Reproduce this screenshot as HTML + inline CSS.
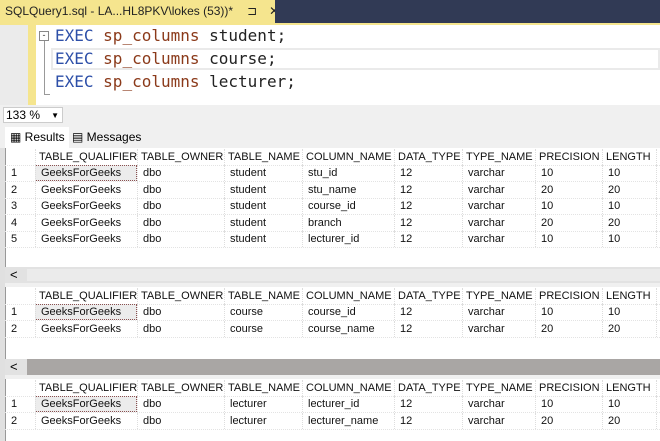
<!DOCTYPE html>
<html><head><meta charset="utf-8"><style>
*{margin:0;padding:0;box-sizing:border-box}
body{width:660px;height:441px;overflow:hidden;background:#f0f0f0;font-family:"Liberation Sans",sans-serif;position:relative}
.a{position:absolute}
.code{font-family:"DejaVu Sans Mono","Liberation Mono",monospace;font-size:16px;white-space:pre;left:55px}
.kw{color:#2d4fa8}.fn{color:#8b3a1a}.tx{color:#222}
.grid{position:absolute;left:5px;width:655px;background:#fff;border-left:1px solid #999}
.r{position:absolute;left:0;height:17px;width:655px;font-size:11px;color:#111;white-space:nowrap}
.r span{position:absolute;top:2px}
.r i{position:absolute;top:0;bottom:0;border-left:1px dotted #ddd}
.hl{position:absolute;left:30px;width:102px;height:16px;background:#ececec;border:1px dotted #8a5050}
.sb{position:absolute;left:5px;width:655px;height:16px;font-size:13px}
</style></head><body>
<div class="a" style="left:0;top:0;width:660px;height:23px;background:#313a55"></div>
<div class="a" style="left:0;top:0;width:275px;height:23px;background:#f5e58e;font-size:12px;color:#222;padding:4px 0 0 5px;white-space:nowrap;overflow:hidden">SQLQuery1.sql - LA...HL8PKV\lokes (53))*<span style="margin-left:14px">⊐</span><span style="margin-left:12px">✕</span></div>
<div class="a" style="left:0;top:23px;width:660px;height:2px;background:#f5e58e"></div>
<div class="a" style="left:0;top:25px;width:28px;height:80px;background:#ebebeb"></div>
<div class="a" style="left:28px;top:25px;width:8px;height:80px;background:#f5e58e"></div>
<div class="a" style="left:36px;top:25px;width:624px;height:80px;background:#fff"></div>
<div class="a" style="left:51px;top:48px;width:609px;height:22px;border:2px solid #eaeaea"></div>
<div class="a" style="left:39px;top:31px;width:10px;height:10px;border:1px solid #888;font-size:9px;line-height:7px;text-align:center;color:#333">-</div>
<div class="a" style="left:44px;top:41px;width:6px;height:54px;border-left:1px solid #999;border-bottom:1px solid #999"></div>
<div class="a code" style="top:26px"><span class="kw">EXEC</span> <span class="fn">sp_columns</span> <span class="tx">student;</span></div>
<div class="a code" style="top:49px"><span class="kw">EXEC</span> <span class="fn">sp_columns</span> <span class="tx">course;</span></div>
<div class="a code" style="top:72px"><span class="kw">EXEC</span> <span class="fn">sp_columns</span> <span class="tx">lecturer;</span></div>
<div class="a" style="left:3px;top:107px;width:60px;height:16px;background:#fff;border:1px solid #ccc;font-size:12px;padding-left:2px">133 %<span style="position:absolute;right:3px;font-size:8px;top:3px">▼</span></div>
<div class="a" style="left:5px;top:127px;width:64px;height:21px;background:#fff;font-size:12px;padding:3px 0 0 5px">▦ Results</div>
<div class="a" style="left:72px;top:130px;font-size:12px">▤ Messages</div>
<div class="a" style="left:0;top:148px;width:5px;height:293px;background:#e0e0e0"></div>
<div id="g"></div>
<script>
var cols=[30,132,219,297,389,457,530,597,651];
var hdr=["TABLE_QUALIFIER","TABLE_OWNER","TABLE_NAME","COLUMN_NAME","DATA_TYPE","TYPE_NAME","PRECISION","LENGTH"];
function row(top,vals,num,hl){var h='<div class="r" style="top:'+top+'px;left:5px;border-bottom:1px dotted #e3e3e3">';
if(hl)h+='<div class="hl" style="top:0"></div>';
h+='<span style="left:6px">'+num+'</span>';
for(var i=0;i<cols.length;i++)h+='<i style="left:'+cols[i]+'px"></i>';
for(var i=0;i<vals.length;i++)h+='<span style="left:'+(cols[i]+(num===''?4:6))+'px">'+vals[i]+'</span>';
return h+'</div>';}
function grid(top,h,rows,name){var s='<div class="grid" style="top:'+top+'px;height:'+h+'px"></div>';
s+=row(top+1,hdr,'',false);
for(var k=0;k<rows.length;k++)s+=row(top+17+k*16.6,["GeeksForGeeks","dbo",name].concat(rows[k]),k+1,k==0);
return s;}
var g='';
g+=grid(148,120,[["stu_id","12","varchar","10","10"],["stu_name","12","varchar","20","20"],["course_id","12","varchar","10","10"],["branch","12","varchar","20","20"],["lecturer_id","12","varchar","10","10"]],"student");
g+='<div class="sb" style="top:267px;background:#e2e2e2"><span style="position:absolute;left:5px;top:0">&lt;</span><div style="position:absolute;left:22px;right:0;top:2px;bottom:2px;background:#ebebeb"></div></div>';
g+=grid(287,72,[["course_id","12","varchar","10","10"],["course_name","12","varchar","20","20"]],"course");
g+='<div class="sb" style="top:359px;background:#e2e2e2"><span style="position:absolute;left:5px;top:0">&lt;</span><div style="position:absolute;left:22px;right:0;top:0;bottom:0;background:#a9a6a4"></div></div>';
g+=grid(379,62,[["lecturer_id","12","varchar","10","10"],["lecturer_name","12","varchar","20","20"]],"lecturer");
document.getElementById('g').innerHTML=g;
</script>
</body></html>
